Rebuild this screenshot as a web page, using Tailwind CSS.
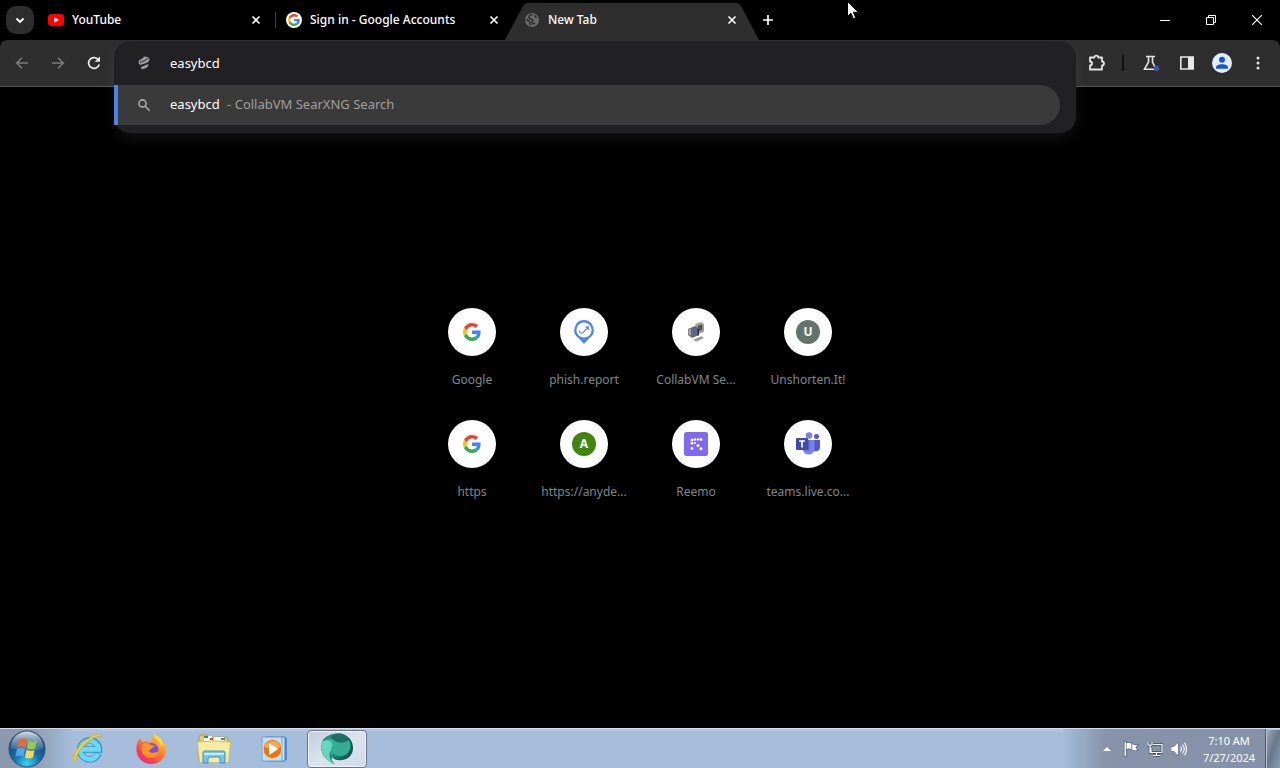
<!DOCTYPE html>
<html lang="en">
<head>
<meta charset="utf-8">
<meta name="viewport" content="width=device-width, initial-scale=1">
<title>New Tab</title>
<script src="https://cdn.jsdelivr.net/npm/@tailwindcss/browser@4"></script>
</head>
<body class="flex min-h-screen flex-col overflow-hidden bg-black font-['Noto_Sans','Open_Sans',sans-serif] text-white">

<svg class="hidden" aria-hidden="true">
  <symbol id="google" viewBox="0 0 48 48">
    <path fill="#EA4335" d="M24 9.5c3.54 0 6.71 1.22 9.21 3.6l6.85-6.85C35.9 2.38 30.47 0 24 0 14.62 0 6.51 5.38 2.56 13.22l7.98 6.19C12.43 13.72 17.74 9.5 24 9.5z"/>
    <path fill="#4285F4" d="M46.98 24.55c0-1.57-.15-3.09-.38-4.55H24v9.02h12.94c-.58 2.96-2.26 5.48-4.78 7.18l7.73 6c4.51-4.18 7.09-10.36 7.09-17.65z"/>
    <path fill="#FBBC05" d="M10.53 28.59c-.48-1.45-.76-2.99-.76-4.59s.27-3.14.76-4.59l-7.98-6.19C.92 16.46 0 20.12 0 24c0 3.88.92 7.54 2.56 10.78l7.97-6.19z"/>
    <path fill="#34A853" d="M24 48c6.48 0 11.93-2.13 15.89-5.81l-7.73-6c-2.15 1.45-4.92 2.3-8.16 2.3-6.26 0-11.57-4.22-13.47-9.91l-7.98 6.19C6.51 42.62 14.62 48 24 48z"/>
  </symbol>
  <symbol id="close" viewBox="0 0 10 10"><path d="M1.5 1.5l7 7M8.5 1.5l-7 7" stroke="#fff" stroke-width="1.6" fill="none"/></symbol>
</svg>

<header class="flex h-10 items-center text-xs font-medium">
  <button class="mr-1 ml-1.5 flex size-7 shrink-0 items-center justify-center rounded-[10px] bg-[#2d2d2d]" aria-label="Search tabs">
    <svg class="size-3" viewBox="0 0 12 12" fill="none" stroke="#fff" stroke-width="1.8"><path d="M2.5 4.5L6 8l3.500-3.500"/></svg>
  </button>
  <div class="flex h-full w-[238px] items-center gap-2 pr-[15px] pl-[10px]">
    <svg class="size-4 shrink-0" viewBox="0 0 16 16"><rect y="2" width="16" height="12" rx="3.500" fill="#f00"/><path d="M6.300 5.300v5.400L11 8z" fill="#fff"/></svg>
    <span class="flex-1 truncate">YouTube</span>
    <button class="flex size-[10px]" aria-label="Close YouTube"><svg class="size-[10px]"><use href="#close"/></svg></button>
  </div>
  <div class="-ml-px h-4 w-px bg-[#3a3a3a]"></div>
  <div class="flex h-full w-[238px] items-center gap-2 pr-[15px] pl-[10px]">
    <span class="flex size-4 shrink-0 items-center justify-center rounded-full bg-white"><svg class="size-3"><use href="#google"/></svg></span>
    <span class="flex-1 truncate">Sign in - Google Accounts</span>
    <button class="flex size-[10px]" aria-label="Close Sign in"><svg class="size-[10px]"><use href="#close"/></svg></button>
  </div>
  <div class="relative flex h-full w-[238px] items-center gap-2 pr-[15px] pl-[10px]">
    <svg class="absolute -left-[9px] bottom-0 h-[37px] w-[254px]" viewBox="0 0 254 37" preserveAspectRatio="none"><path d="M0 37L18 3Q20 0 23 0H231Q234 0 236 3L254 37z" fill="#2e2e2e"/></svg>
    <svg class="relative size-4 shrink-0" viewBox="0 0 16 16"><circle cx="8" cy="8" r="7" fill="#6b6b6b"/><path d="M8.500 2.500C5.500 3 4.500 4.500 5 6s3 .800 3.500 2-.500 1.500-.200 2.800 1.600 1.300 2.700.200M2.500 7c1 2 3 2.200 3.500 3.500s0 1.800.800 2.800M11 3c-.800 1.200.200 2 1.800 2.500" fill="none" stroke="#303030" stroke-width="1.700"/></svg>
    <span class="relative flex-1 truncate">New Tab</span>
    <button class="relative flex size-[10px]" aria-label="Close New Tab"><svg class="size-[10px]"><use href="#close"/></svg></button>
  </div>
  <button class="ml-2 flex size-4 items-center justify-center" aria-label="New tab"><svg class="size-3" viewBox="0 0 12 12" stroke="#fff" stroke-width="1.700"><path d="M6 1v10M1 6h10"/></svg></button>
  <div class="ml-auto flex h-full">
    <button class="flex w-[46px] items-center justify-center" aria-label="Minimize"><svg class="size-[10px]" viewBox="0 0 10 10"><path d="M0 5.500h10" stroke="#fff"/></svg></button>
    <button class="flex w-[46px] items-center justify-center" aria-label="Restore"><svg class="size-[10px]" viewBox="0 0 10 10" fill="none" stroke="#fff"><path d="M.500 2.500h7v7h-7zM2.500 2.500v-2h7v7h-2"/></svg></button>
    <button class="flex w-[46px] items-center justify-center" aria-label="Close"><svg class="size-[10px]" viewBox="0 0 10 10" stroke="#fff" stroke-width="1.100"><path d="M0 0l10 10M10 0L0 10"/></svg></button>
  </div>
</header>

<nav class="flex h-[47px] items-center rounded-t-lg border-b border-[#555] bg-[#2e2e2e]" aria-label="Browser toolbar">
  <div class="flex shrink-0 items-center gap-5 pr-3 pl-3.5">
    <button aria-label="Back"><svg class="size-4" viewBox="0 0 16 16" fill="none" stroke="#7c7c7c" stroke-width="1.600"><path d="M14 8H3M8 2.700L2.700 8 8 13.300"/></svg></button>
    <button aria-label="Forward"><svg class="size-4" viewBox="0 0 16 16" fill="none" stroke="#7c7c7c" stroke-width="1.600"><path d="M2 8h11M8 2.700L13.300 8 8 13.300"/></svg></button>
    <button aria-label="Reload"><svg class="size-4" viewBox="0 0 16 16"><path d="M13.200 9.500A5.400 5.400 0 1 1 11.900 4.200L13 5.400" fill="none" stroke="#eee" stroke-width="1.700"/><path d="M14 1.500v5.300H8.700z" fill="#eee"/></svg></button>
  </div>

  <div class="relative h-full min-w-0 flex-1">
    <div class="absolute inset-x-0 top-px z-10 rounded-2xl bg-[#212124] pb-2 text-[13px] shadow-[0_6px_14px_0_rgba(255,255,255,0.07)]">
      <div class="flex h-11 items-center pl-[22px]">
        <svg class="size-4 shrink-0" viewBox="0 0 16 16" fill="#9a9a9f"><path d="M3 5.500L7 3l1-1.500 4 .500 1.500 2-1 3L9 8.500 4 10 2.500 8zM5 12l7-3 .500 1.500-2 2.500-5 1.500z"/><path d="M4 7.500l5-2 3-2.500M5 11.300l7-3" stroke="#242428" stroke-width=".9" fill="none"/></svg>
        <input class="ml-[18px] h-full min-w-0 flex-1 bg-transparent text-white outline-none" aria-label="Address and search bar" value="easybcd" type="text">
      </div>
      <div class="mr-4 flex h-10 items-center rounded-r-full border-l-4 border-[#4c83ea] bg-[#3a3a3a] pl-[18px]" role="option" aria-selected="true">
        <svg class="size-4 shrink-0" viewBox="0 0 16 16" fill="none" stroke="#aaa" stroke-width="1.600"><circle cx="6.500" cy="6.500" r="3.600"/><path d="M9.200 9.200l4.500 4.500"/></svg>
        <span class="ml-[18px] flex gap-1 whitespace-pre">easybcd <span class="text-[#a0a0a0]">- CollabVM SearXNG Search</span></span>
      </div>
    </div>
  </div>

  <div class="flex shrink-0 items-center pr-2.5 pl-3">
    <button aria-label="Extensions"><svg class="size-[18px]" viewBox="0 0 18 18" fill="none" stroke="#e4e4e4" stroke-width="1.800"><path d="M2 3.500h4.300C6.300 1 10.300 1 10.300 3.500H14v4c2.600 0 2.600 4 0 4V15.500H2v-4c2.700-.300 2.700-4 0-4z" stroke-linejoin="round"/></svg></button>
    <div class="mr-[18px] ml-4 h-4 w-0.5 bg-[#111]"></div>
    <button class="mr-[18px]" aria-label="Experiments"><svg class="size-[18px]" viewBox="0 0 18 18"><path d="M4 2.500h9M6.500 3v5L2.500 15.200H14L10.500 8V3" fill="none" stroke="#e4e4e4" stroke-width="1.600"/><circle cx="14.500" cy="14.500" r="2.800" fill="#4054b4"/></svg></button>
    <button class="mr-4" aria-label="Side panel"><svg class="size-[18px]" viewBox="0 0 18 18"><path d="M2.800 3h12.400v12H2.800z" fill="none" stroke="#e8e8e8" stroke-width="1.600"/><path d="M10 3h5v12h-5z" fill="#e8e8e8"/></svg></button>
    <button class="mr-3.5" aria-label="Profile"><svg class="size-5" viewBox="0 0 20 20"><circle cx="10" cy="10" r="10" fill="#e3ecfb"/><circle cx="10" cy="6.800" r="3" fill="#1357ce"/><path d="M4 14.500c0-4.200 12-4.200 12 0v1.200H4z" fill="#1357ce"/></svg></button>
    <button aria-label="Menu"><svg class="size-6" viewBox="0 0 24 24" fill="#e4e4e4"><circle cx="12" cy="7" r="1.500"/><circle cx="12" cy="12" r="1.500"/><circle cx="12" cy="17" r="1.500"/></svg></button>
  </div>
</nav>

<main class="flex flex-1 items-center justify-center">
  <div class="mb-2 grid grid-cols-4 text-xs leading-5 text-[#7f8689]">
    <a href="#" class="flex h-28 w-28 flex-col items-center pt-4"><span class="mb-3.5 flex size-12 items-center justify-center rounded-full bg-white"><svg class="size-[18px]"><use href="#google"/></svg></span>Google</a>
    <a href="#" class="flex h-28 w-28 flex-col items-center pt-4"><span class="mb-3.5 flex size-12 items-center justify-center rounded-full bg-white">
      <svg class="size-6" viewBox="0 0 24 24"><path d="M12 0a10 10 0 0 1 5 18.500L12 24l-5-5.500A10 10 0 0 1 12 0z" fill="#4c86ee"/><circle cx="12" cy="10" r="7.600" fill="#fff"/><path d="M7.500 10.500c0 3.500 3.500 3 4.500 1l4.500-4.500M13.500 7h3v3" fill="none" stroke="#6f8fd0" stroke-width="1.300"/></svg></span>phish.report</a>
    <a href="#" class="flex h-28 w-28 flex-col items-center pt-4"><span class="mb-3.5 flex size-12 items-center justify-center rounded-full bg-white">
      <svg class="size-6" viewBox="0 0 24 24"><path d="M11 4l6-2 3 2v8l-6 2z" fill="#aaa282"/><path d="M14 5.500l4-1 .500 5-4 2z" fill="#46545f"/><path d="M4 9l7-3 4 2v7l-7 3-4-3z" fill="#6a6678"/><path d="M4.500 9.500l2.500-1v7l-2.500-1z" fill="#b0a98a"/><path d="M8.500 9.500l4-1v6l-4 1.500z" fill="#496ca8"/><path d="M13.500 8.500l1.500.500v6l-1.500 1z" fill="#302c35"/><path d="M9 20l4-2 5-2 2 2-7 4z" fill="#c6c6c1"/><path d="M11 21l8-3.500M10 20l8-3" stroke="#777" stroke-width=".7"/></svg></span>CollabVM Se...</a>
    <a href="#" class="flex h-28 w-28 flex-col items-center pt-4"><span class="mb-3.5 flex size-12 items-center justify-center rounded-full bg-white"><span class="flex size-6 items-center justify-center rounded-full bg-[#63756b] text-xs font-bold text-white">U</span></span>Unshorten.It!</a>
    <a href="#" class="flex h-28 w-28 flex-col items-center pt-4"><span class="mb-3.5 flex size-12 items-center justify-center rounded-full bg-white"><svg class="size-[18px]"><use href="#google"/></svg></span>https</a>
    <a href="#" class="flex h-28 w-28 flex-col items-center pt-4"><span class="mb-3.5 flex size-12 items-center justify-center rounded-full bg-white"><span class="flex size-6 items-center justify-center rounded-full bg-[#42850e] text-xs font-bold text-white">A</span></span>https://anyde...</a>
    <a href="#" class="flex h-28 w-28 flex-col items-center pt-4"><span class="mb-3.5 flex size-12 items-center justify-center rounded-full bg-white">
      <svg class="size-6" viewBox="0 0 24 24"><rect width="24" height="24" rx="2.500" fill="#8069ee"/><g fill="#fff"><circle cx="8" cy="8" r="1.500"/><circle cx="11" cy="7.500" r="1.200"/><circle cx="14" cy="7.500" r="1.200"/><circle cx="17" cy="7.500" r="1.400"/><circle cx="8" cy="11.300" r="1.400"/><circle cx="8" cy="16.500" r="1.400"/><circle cx="14" cy="13.500" r="1.500"/><circle cx="17" cy="16.700" r="1.500"/><circle cx="11" cy="11" r="1.100"/></g></svg></span>Reemo</a>
    <a href="#" class="flex h-28 w-28 flex-col items-center pt-4"><span class="mb-3.5 flex size-12 items-center justify-center rounded-full bg-white">
      <svg class="size-6" viewBox="0 0 24 24"><circle cx="20.500" cy="4.500" r="2.500" fill="#5059c9"/><circle cx="13" cy="3.500" r="3.300" fill="#7b83eb"/><path d="M16 8h8v7.500a4 4 0 0 1-7 2.500z" fill="#5059c9"/><path d="M7 8h11.500v8.500c0 8-11.500 8-11.500 0z" fill="#7b83eb"/><path d="M7 8h6.500v10.500H7z" fill="#5660bd"/><rect y="6" width="12" height="12" rx="1" fill="#4049ac"/><path d="M3 9h6M6 9v6.500" stroke="#fff" stroke-width="1.700"/></svg></span>teams.live.co...</a>
  </div>
</main>

<footer class="flex h-10 items-center border-t border-[#d3dce8] bg-linear-to-b from-[#b5c8e1] via-[#a5bddb] via-10% to-[#a5bddb]">
  <div class="flex h-full items-center bg-linear-to-r from-[#8c98ad] via-[#8f9db4] via-50% to-[#a5bddb] pr-[26px] pl-2">
    <button aria-label="Start"><svg class="size-[38px]" viewBox="0 0 38 38">
      <defs><radialGradient id="orb" cx=".5" cy=".9" r=".8"><stop offset="0" stop-color="#37d5f4"/><stop offset=".45" stop-color="#1670ab"/><stop offset="1" stop-color="#173f6f"/></radialGradient><linearGradient id="shine" x2="0" y2="1"><stop stop-color="#e7f0f5" stop-opacity=".9"/><stop offset="1" stop-color="#a0bfd0" stop-opacity=".15"/></linearGradient></defs>
      <circle cx="19" cy="19" r="18" fill="url(#orb)" stroke="#344b68"/><path d="M2.500 18a16.500 16.500 0 0 1 33 0c-10 4-22 4-33 0z" fill="url(#shine)"/>
      <path d="M11 10q4-3 8-.500l-1.500 8q-4-2-8 0z" fill="#ed6734"/><path d="M20.500 10.500q4 2.500 8.500 0l-2 8q-4 2-8-.200z" fill="#9bc849"/><path d="M9 19q4-2 8 0l-1.500 7.500q-4-2-8 0z" fill="#55a6e8"/><path d="M18.500 19.800q4 2 8 .200L25 27.500q-4 2-8 0z" fill="#ffd257"/></svg></button>
  </div>
  <button class="flex w-8 justify-center" aria-label="Internet Explorer"><svg class="size-8" viewBox="0 0 32 32">
    <path d="M26.500 20.500a9.500 9.500 0 1 1 .500-5.500v1.500H10" fill="none" stroke="#2497ce" stroke-width="6.500"/><path d="M26 20.700a9.200 9.200 0 1 1 .500-5.700v1.300H10" fill="none" stroke="#6bd8f7" stroke-width="4.800"/><path d="M3 29.500C-2 27 5 12 17 5 23 1 30 0 30 4c-2-1.500-6-.500-10 2C11 11 3 22 4 28z" fill="#f5cd3a" stroke="#d99e1c" stroke-width=".6"/></svg></button>
  <button class="ml-[31px] flex w-8 justify-center" aria-label="Firefox"><svg class="size-8" viewBox="0 0 32 32">
    <defs><linearGradient id="fox" x1="1" x2=".2" y2="1"><stop stop-color="#ffe34f"/><stop offset=".45" stop-color="#ff8b27"/><stop offset=".8" stop-color="#f73c55"/><stop offset="1" stop-color="#e32a7d"/></linearGradient></defs>
    <path d="M3 8l2-3 2 4 4-1 5 1c0-3 2-6 4-8 0 3 7 5 9 10l1-1c4 10-2 21-14 21C5 31-2 20 3 8z" fill="url(#fox)"/><circle cx="16.500" cy="17" r="7" fill="#7951d8"/><path d="M8 11c3-2 6-1 8 1l4 1-4 3c-2 1-3 3 1 4 3 0 5-2 7-1-2 6-11 8-15 3-3-3-3-8-1-11z" fill="#ff9428"/><path d="M19 1c-1 5 6 6 7 13 4-4 0-10-7-13z" fill="#ffdb3e"/></svg></button>
  <button class="ml-[29px] flex w-9 justify-center" aria-label="Windows Explorer"><svg class="h-8 w-9" viewBox="0 0 36 32">
    <path d="M3 4q0-2 2-2h6l2 2h16q3 0 3 3v22H3z" fill="#e3ca6b" stroke="#b99c46"/><path d="M8 3h8v5H8z" fill="#fafafa"/><path d="M18 4h10v5H18z" fill="#f3f8ec"/><path d="M8 3h4v2H8z" fill="#329245"/><path d="M14 5h3v2h-3z" fill="#ce5337"/><path d="M25 5h4v2h-4z" fill="#3a87b8"/><path d="M1.500 9q16-2 33 0l-2 20.500H3.500z" fill="#f7eba1" stroke="#d2bf67"/><path d="M7 30V20q0-2 2-2h18q2 0 2 2v10h-5v-4q0-2-2-2h-8q-2 0-2 2v4z" fill="#75c2eb" stroke="#3f93c8"/><path d="M8 21h20" stroke="#c6ebfb" stroke-width="2"/></svg></button>
  <button class="ml-[27px] flex w-8 justify-center" aria-label="Media Player"><svg class="h-7 w-8" viewBox="0 0 32 28">
    <path d="M10 3h18v22H10z" fill="#4b91ce"/><path d="M7 2h19v24H7z" fill="#cbe6f6" stroke="#397fb9"/><path d="M3 2h20v24H3z" fill="#c2dff3" stroke="#6ba6d1"/><circle cx="13.500" cy="14" r="9.500" fill="#e87516" stroke="#f9d5ac"/><path d="M5 12a9 9 0 0 1 17 0q-8 3-17 0z" fill="#f7a653"/><path d="M10 8l9.500 6-9.500 6z" fill="#fff"/></svg></button>
  <button class="ml-4 flex h-[38px] w-[60px] items-center justify-center rounded-sm border border-[#647488] bg-linear-to-br from-[#c2ccd8] via-[#dce3ed] to-[#d0dae7] shadow-[inset_0_0_0_1px_#f3f6fa]" aria-label="Browser"><svg class="size-[34px]" viewBox="0 0 34 34">
    <defs><radialGradient id="globe" cx=".4" cy=".4"><stop stop-color="#54dbc0"/><stop offset=".6" stop-color="#229681"/><stop offset="1" stop-color="#145c56"/></radialGradient></defs>
    <path d="M3 8C9 0 24-1 30 7s3 20-8 21c-6 1-8-1-10-3-1 3 0 5 3 7C6 30-3 19 3 8z" fill="url(#globe)"/><path d="M2 10c7-5 11 0 9 7-2 4-3 9 3 15C5 29-1 19 2 10z" fill="#66d6bf"/><path d="M12 8c6 5 10 4 17 0 3 6 1 11-2 14-7 4-13 2-16-5 2-3 2-6 1-9z" fill="#34ad94"/><path d="M11 4c8-5 15-2 18 3-7 5-12 5-18-1z" fill="#1c7068"/></svg></button>

  <div class="ml-auto flex h-full items-center bg-linear-to-r from-[#a5bddb] via-[#8693aa] via-20% to-[#8491a7] pl-9">
    <button class="flex w-4 justify-center" aria-label="Show hidden icons"><svg class="h-1 w-2" viewBox="0 0 8 4"><path d="M4 0l4 4H0z" fill="#fff"/></svg></button>
    <button class="ml-2" aria-label="Action Center"><svg class="size-4" viewBox="0 0 16 16"><path d="M1.500 1h1.500v14H1.500z" fill="#fff" stroke="#46556b" stroke-width="1.200" paint-order="stroke"/><path d="M3.500 2q3-1 5.500 1 3 1.500 6 .500L12.500 6.500 14.500 9q-3 1-6-.500-2-1.500-5-.500z" fill="#fff" stroke="#46556b" stroke-width="1.200" paint-order="stroke"/><path d="M8.800 3v5.500" stroke="#6d7b90"/></svg></button>
    <button class="ml-2" aria-label="Network"><svg class="size-4" viewBox="0 0 16 16" fill="none"><path d="M6 3.500h9v8H4V7M9.500 12v2.500M6 14.500h7M1 1v3h4V1M3 4v7.500h2" stroke="#3e4c62" stroke-width="2.600"/><path d="M6 3.500h9v8H4V7M9.500 12v2.500M6 14.500h7M1 1v3h4V1M3 4v7.500h2" stroke="#fff" stroke-width="1.200"/></svg></button>
    <button class="mr-1.5 ml-2" aria-label="Volume"><svg class="size-4" viewBox="0 0 16 16"><path d="M0 5.500h3L7.500 1v14L3 10.500H0z" fill="#fff" stroke="#46556b" stroke-width=".6"/><path d="M9.500 5.500q2 2.500 0 5M11.500 3.500q3.500 4.500 0 9M13.500 1.800q4 6 0 12.400" fill="none" stroke="#fff" stroke-width="1.100"/></svg></button>
    <time class="flex w-[72px] flex-col items-center text-[11px] leading-[17px]" datetime="2024-07-27T07:10"><span>7:10 AM</span><span>7/27/2024</span></time>
    <button class="h-full w-[15px] border-l border-[#4c5869] bg-linear-to-br from-[#a4afbd] via-[#68778b] to-[#8e9caf] shadow-[inset_1px_1px_0_#b8c3d0]" aria-label="Show desktop"></button>
  </div>
</footer>

<svg class="pointer-events-none absolute top-px left-[847px] z-20 h-[19px] w-3" viewBox="0 0 12 19"><path d="M.500.500v15l3.500-3.300 2.300 5.500 2.400-1L6.400 11.300h5z" fill="#fff" stroke="#000"/></svg>
</body>
</html>
